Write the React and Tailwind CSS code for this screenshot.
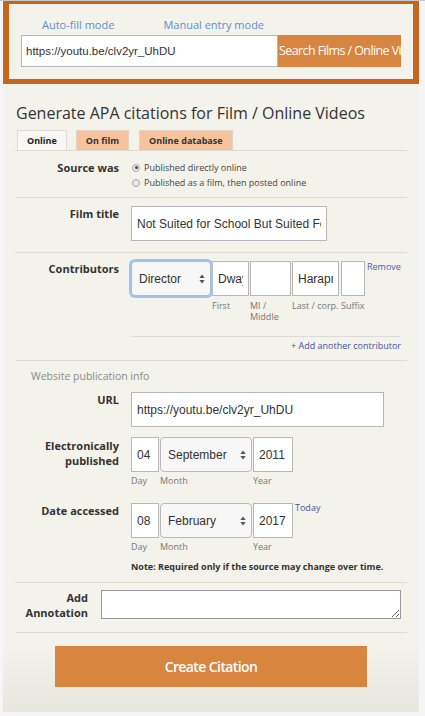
import { useState } from 'react';

const ctrlFont = "font-['Liberation_Sans',Arial,sans-serif]";
const inputCls = `h-[35px] border border-[#b7b7b7] bg-white px-[5px] text-[12px] text-[#333] outline-none ${ctrlFont}`;

function Arrows() {
  return (
    <svg width="6" height="10" viewBox="0 0 6 10" className="pointer-events-none absolute right-[6px] top-1/2 -translate-y-1/2">
      <path d="M3 0.5 L5.6 4 L0.4 4 Z" fill="#555" />
      <path d="M3 9.5 L5.6 6 L0.4 6 Z" fill="#555" />
    </svg>
  );
}

function Select({ value, options, width, focused }) {
  return (
    <div className={`relative ${width}`}>
      <select
        defaultValue={value}
        className={`h-[35px] w-full appearance-none rounded-[4px] border border-[#b9b9b9] bg-[#f7f7f7] pl-[7px] text-[12px] text-[#333] outline-none ${ctrlFont} ${
          focused ? 'shadow-[0_0_0_2px_#9fc4f1]' : ''
        }`}
      >
        {options.map((o) => (
          <option key={o}>{o}</option>
        ))}
      </select>
      <Arrows />
    </div>
  );
}

function Radio({ checked, label }) {
  return (
    <label className="flex items-center gap-[4px] leading-[15px]">
      <span className="flex h-[8px] w-[8px] items-center justify-center rounded-full border border-[#a9a9a9] bg-[#e9e9e9]">
        {checked && <span className="h-[3px] w-[3px] rounded-full bg-[#444]" />}
      </span>
      <span>{label}</span>
    </label>
  );
}

function Label({ children, className = '' }) {
  return (
    <div className={`w-[104px] shrink-0 text-right text-[11px] font-bold leading-[15px] text-[#333] ${className}`}>
      {children}
    </div>
  );
}

const months = [
  'January', 'February', 'March', 'April', 'May', 'June',
  'July', 'August', 'September', 'October', 'November', 'December',
];

function DateRow({ label, day, month, year, today, labelClass }) {
  return (
    <div className="flex">
      <Label className={labelClass}>{label}</Label>
      <div className="ml-[12px]">
        <div className="flex items-start gap-[1px]">
          <input defaultValue={day} className={`${inputCls} w-[28px]`} />
          <Select value={month} options={months} width="w-[92px]" />
          <input defaultValue={year} className={`${inputCls} w-[40px]`} />
          {today && (
            <a className="ml-[1px] mt-[-1px] text-[9px] leading-[12px] text-[#4b4fa0]">Today</a>
          )}
        </div>
        <div className="mt-[3px] flex text-[9px] leading-[11px] text-[#777]">
          <span className="w-[29px]">Day</span>
          <span className="w-[93px]">Month</span>
          <span>Year</span>
        </div>
      </div>
    </div>
  );
}

export default function App() {
  const [source, setSource] = useState('online');

  return (
    <div className="min-h-[716px] border-t border-[#c9c9c9] bg-[#f5f5f7] font-['Open_Sans',sans-serif] text-[#333]">
      <div className="ml-[3px] w-[416px]">
        <div className="border-x-[6px] border-b-[5px] border-t-[3px] border-[#c6651b] bg-[#f3f2eb] pb-[12px] pt-[12px]">
          <div className="flex gap-[49px] pl-[33px] text-[11px] leading-[17px] text-[#5b8fd4]">
            <a>Auto-fill mode</a>
            <a>Manual entry mode</a>
          </div>
          <div className="ml-[12px] mt-[2px] flex h-[32px]">
            <input
              defaultValue="https://youtu.be/clv2yr_UhDU"
              className={`h-full w-[257px] border border-[#b7b7b7] bg-white px-[4px] text-[11.5px] text-[#333] outline-none ${ctrlFont}`}
            />
            <button className="h-full w-[123px] overflow-hidden whitespace-nowrap bg-[#d8853f] pl-[1px] text-left text-[12.5px] tracking-[-0.6px] text-white">
              Search Films / Online Videos
            </button>
          </div>
        </div>

        <div className="bg-gradient-to-b from-[#f3f2eb] from-90% to-[#e8e7de] pb-[25px] pt-[18px]">
          <h1 className="mx-[13px] text-[16px] leading-[22px] text-[#333]">
            Generate APA citations for Film / Online Videos
          </h1>

          <div className="mx-[12px] mt-[6px] flex gap-[9px] border-b border-[#dddbd4] pl-[2px]">
            <button className="h-[20px] border border-b-0 border-[#dcdbd5] bg-[#f8f7f3] px-[9px] text-[9px] font-bold text-[#222]">
              Online
            </button>
            <button className="h-[20px] border border-b-0 border-[#e3d3c4] bg-[#f6c39c] px-[9px] text-[9px] font-bold text-[#333]">
              On film
            </button>
            <button className="ml-[1px] h-[20px] border border-b-0 border-[#e3d3c4] bg-[#f6c39c] px-[9px] text-[9px] font-bold text-[#333]">
              Online database
            </button>
          </div>

          <div className="mx-[12px]">
            {/* source */}
            <div className="flex border-b border-[#dddbd4] pb-[7px] pt-[9px]">
              <Label>Source was</Label>
              <div className="ml-[13px] text-[9px] text-[#444]" onClick={() => setSource(source === 'online' ? 'film' : 'online')}>
                <Radio checked={source === 'online'} label="Published directly online" />
                <Radio checked={source === 'film'} label="Published as a film, then posted online" />
              </div>
            </div>

            {/* film title */}
            <div className="flex border-b border-[#dddbd4] pb-[11px] pt-[8px]">
              <Label>Film title</Label>
              <input
                defaultValue="Not Suited for School But Suited For Success"
                className={`${inputCls} ml-[12px] w-[196px]`}
              />
            </div>

            {/* contributors */}
            <div className="border-b border-[#dddbd4]">
              <div className="flex pt-[8px]">
                <Label>Contributors</Label>
                <div className="ml-[12px] w-[270px]">
                  <div className="flex items-start">
                    <Select value="Director" options={['Director', 'Writer', 'Producer']} width="w-[80px]" focused />
                    <div className="ml-[1px]">
                      <input defaultValue="Dwayne" className={`${inputCls} w-[37px]`} />
                      <div className="mt-[4px] text-[9px] leading-[11px] text-[#777]">First</div>
                    </div>
                    <div className="ml-[1px]">
                      <input className={`${inputCls} w-[41px]`} />
                      <div className="mt-[4px] text-[9px] leading-[11px] text-[#777]">
                        MI /<br />Middle
                      </div>
                    </div>
                    <div className="ml-[1px]">
                      <input defaultValue="Harapnuik" className={`${inputCls} w-[47px]`} />
                      <div className="mt-[4px] whitespace-nowrap text-[9px] leading-[11px] text-[#777]">Last / corp.</div>
                    </div>
                    <div className="ml-[2px]">
                      <input className={`${inputCls} w-[24px]`} />
                      <div className="mt-[4px] text-[9px] leading-[11px] text-[#777]">Suffix</div>
                    </div>
                    <a className="ml-[2px] text-[9px] leading-[12px] text-[#4d5da6]">Remove</a>
                  </div>
                  <div className="mt-[14px] border-t border-[#dddbd4] pb-[8px] pt-[2px] text-right text-[9px] leading-[13px] text-[#4b4fa0]">
                    <a>+ Add another contributor</a>
                  </div>
                </div>
              </div>
            </div>

            {/* website info */}
            <div className="border-b border-[#dddbd4] pb-[9px] pt-[8px]">
              <div className="pl-[16px] text-[10.5px] leading-[15px] text-[#8a8a8a]">Website publication info</div>

              <div className="mt-[8px] flex">
                <Label>URL</Label>
                <input
                  defaultValue="https://youtu.be/clv2yr_UhDU"
                  className={`${inputCls} ml-[12px] w-[253px]`}
                />
              </div>

              <div className="mt-[10px]">
                <DateRow
                  label={<>Electronically<br />published</>}
                  labelClass="mt-[1px] leading-[14px]"
                  day="04"
                  month="September"
                  year="2011"
                />
              </div>

              <div className="mt-[17px]">
                <DateRow label="Date accessed" day="08" month="February" year="2017" today />
              </div>

              <div className="ml-[116px] mt-[9px] text-[9px] font-bold leading-[12px] text-[#333]">
                Note: Required only if the source may change over time.
              </div>
            </div>

            {/* annotation */}
            <div className="flex border-b border-[#dddbd4] pb-[12px] pt-[7px]">
              <div className="w-[73px] shrink-0 text-right text-[11px] font-bold leading-[15px] text-[#333]">
                Add<br />Annotation
              </div>
              <textarea className="ml-[13px] h-[29px] w-[300px] border border-[#999] bg-white text-[12px] outline-none" />
            </div>
          </div>

          <button className="mx-auto mt-[13px] block h-[41px] w-[312px] bg-[#d8853f] text-[14px] font-semibold tracking-[-0.6px] text-white">
            Create Citation
          </button>
        </div>
      </div>
    </div>
  );
}
